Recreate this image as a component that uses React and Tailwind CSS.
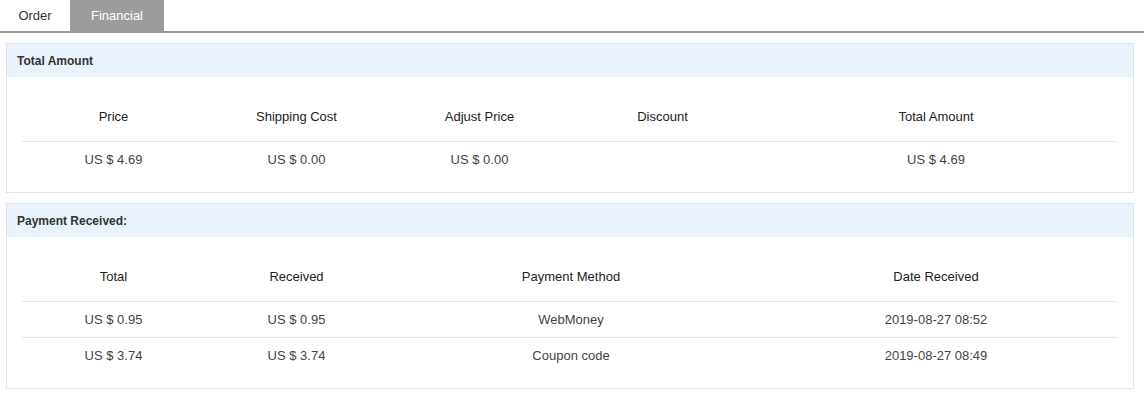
import React from 'react';

const totals = [
  { label: 'Price', value: 'US $ 4.69', w: 'w-[183px]' },
  { label: 'Shipping Cost', value: 'US $ 0.00', w: 'w-[183px]' },
  { label: 'Adjust Price', value: 'US $ 0.00', w: 'w-[183px]' },
  { label: 'Discount', value: '', w: 'w-[183px]' },
  { label: 'Total Amount', value: 'US $ 4.69', w: 'w-[364px]' },
];

const payCols = [
  { label: 'Total', w: 'w-[183px]' },
  { label: 'Received', w: 'w-[183px]' },
  { label: 'Payment Method', w: 'w-[366px]' },
  { label: 'Date Received', w: 'w-[364px]' },
];

const payments = [
  ['US $ 0.95', 'US $ 0.95', 'WebMoney', '2019-08-27 08:52'],
  ['US $ 3.74', 'US $ 3.74', 'Coupon code', '2019-08-27 08:49'],
];

const Panel = ({ title, children }) => (
  <div className="border border-[#dfe5eb] bg-white">
    <div className="h-[33px] bg-[#eaf2fc] px-[10px] flex items-center text-[12px] font-bold text-[#333]">
      {title}
    </div>
    <div className="px-[15px] pt-[15px] pb-[14px]">{children}</div>
  </div>
);

export default function App() {
  return (
    <div className="bg-white w-[1146px] h-[398px] text-[13px] font-['Liberation_Sans',Arial,sans-serif]">
      {/* Tabs */}
      <div className="flex h-[33px] mr-[2px] border-b-2 border-[#999]">
        <div className="w-[70px] flex items-center justify-center text-[#333]">Order</div>
        <div className="w-[94px] flex items-center justify-center bg-[#9c9c9c] text-white">Financial</div>
      </div>

      <div className="pl-[6px] pr-[12px] pt-[10px] flex flex-col gap-[10px]">
        <Panel title="Total Amount">
          <div className="flex h-[50px] items-center border-b border-[#e6e6e6] text-[#222]">
            {totals.map((c) => (
              <div key={c.label} className={`${c.w} text-center`}>{c.label}</div>
            ))}
          </div>
          <div className="flex h-[36px] items-center text-[#444]">
            {totals.map((c) => (
              <div key={c.label} className={`${c.w} text-center`}>{c.value}</div>
            ))}
          </div>
        </Panel>

        <Panel title="Payment Received:">
          <div className="flex h-[50px] items-center border-b border-[#e6e6e6] text-[#222]">
            {payCols.map((c) => (
              <div key={c.label} className={`${c.w} text-center`}>{c.label}</div>
            ))}
          </div>
          {payments.map((row, i) => (
            <div
              key={i}
              className={`flex h-[36px] items-center text-[#444] ${i < payments.length - 1 ? 'border-b border-[#e6e6e6]' : ''}`}
            >
              {row.map((v, j) => (
                <div key={j} className={`${payCols[j].w} text-center`}>{v}</div>
              ))}
            </div>
          ))}
        </Panel>
      </div>
    </div>
  );
}
